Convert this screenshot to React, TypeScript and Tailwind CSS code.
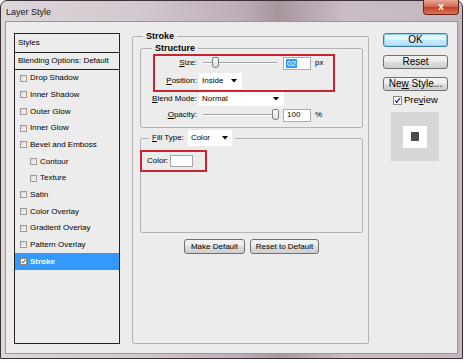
import React from 'react';

type Item = { label: string; indent?: boolean; checked?: boolean; selected?: boolean };

const items: Item[] = [
  { label: 'Drop Shadow' },
  { label: 'Inner Shadow' },
  { label: 'Outer Glow' },
  { label: 'Inner Glow' },
  { label: 'Bevel and Emboss' },
  { label: 'Contour', indent: true },
  { label: 'Texture', indent: true },
  { label: 'Satin' },
  { label: 'Color Overlay' },
  { label: 'Gradient Overlay' },
  { label: 'Pattern Overlay' },
  { label: 'Stroke', checked: true, selected: true },
];

function CheckMark() {
  return (
    <svg width="7" height="7" viewBox="0 0 7 7" className="block">
      <path d="M1 3.6 L2.8 5.4 L6 1.2" stroke="#1d3b8f" strokeWidth="1.4" fill="none" />
    </svg>
  );
}

function SmallCheck({ checked }: { checked?: boolean }) {
  return (
    <span
      className={
        checked
          ? 'w-[7px] h-[7px] shrink-0 border border-[#8c8c8c] bg-white flex items-center justify-center'
          : 'w-[7px] h-[7px] shrink-0 border border-[#9a9a9a] bg-[linear-gradient(135deg,#d8d8d8,#fbfbfb)]'
      }
    >
      {checked && <CheckMark />}
    </span>
  );
}

function Arrow() {
  return (
    <svg width="6" height="4" viewBox="0 0 6 4" className="block shrink-0">
      <path d="M0 0 H6 L3 3.5 Z" fill="#000" />
    </svg>
  );
}

function Slider({ thumb }: { thumb: 'left' | 'right' }) {
  return (
    <div className="ml-[6px] w-[74px] h-[14px] relative shrink-0">
      <div className="absolute left-0 right-0 top-[6px] h-[2px] border-t border-[#a3a3a3] border-b border-b-white" />
      <div
        className={
          thumb === 'left'
            ? 'absolute top-[1px] left-[9px] w-[7px] h-[11px] rounded-t-[2px] rounded-b-[3px] border border-[#7d7d7d] bg-[linear-gradient(#ffffff,#dcdcdc)]'
            : 'absolute top-[1px] left-[69px] w-[7px] h-[11px] rounded-t-[2px] rounded-b-[3px] border border-[#7d7d7d] bg-[linear-gradient(#ffffff,#dcdcdc)]'
        }
      />
    </div>
  );
}

export default function App() {
  return (
    <div className="w-[467px] h-[363px] bg-white overflow-hidden [font-family:'Liberation_Sans',Arial,sans-serif] text-black">
      <div className="w-[463px] h-[359px] border border-[#3b3036] rounded-t-[7px] flex flex-col bg-[linear-gradient(90deg,#ddd6db_0%,#d2c8cf_30%,#bcaeb8_52%,#a8969f_60%,#c9bdc6_75%,#c2b6bf_100%)]">
        {/* Title bar */}
        <div className="h-[20px] flex justify-between items-start shrink-0">
          <span className="pl-[5px] pt-[5px] text-[9px] leading-[12px] text-[#151515]">Layer Style</span>
          <div className="w-[36px] h-[15px] -mt-[1px] mr-[3px] rounded-b-[4px] border border-t-0 border-[#6b2318] bg-[linear-gradient(#eba696,#d5654d_50%,#c23c23_50%,#d9755d)] flex items-center justify-center text-white text-[10px] font-bold leading-none">
            x
          </div>
        </div>

        {/* Content */}
        <div className="mx-[4px] h-[333px] border border-[#9b949a] bg-[#ececec] flex items-start">
          {/* Styles list */}
          <div className="ml-[8px] mt-[11px] w-[106px] h-[311px] border border-[#222] flex flex-col text-[8px] shrink-0">
            <div className="h-[19px] flex items-center pl-[3px] border-b border-[#222]">Styles</div>
            <div className="h-[17px] flex items-center pl-[3px] border-b border-[#222]">Blending Options: Default</div>
            {items.map((it) => (
              <div
                key={it.label}
                className={
                  (it.selected ? 'bg-[#3399ff] text-white font-bold ' : '') +
                  (it.indent ? 'pl-[15px] ' : 'pl-[5px] ') +
                  'h-[16.67px] flex items-center gap-[3px]'
                }
              >
                <SmallCheck checked={it.checked} />
                <span>{it.label}</span>
              </div>
            ))}
          </div>

          {/* Stroke group */}
          <fieldset className="ml-[12px] mt-[9px] w-[237px] h-[313px] border border-[#b3b3b3] rounded-[2px] pl-[7px] pr-[5px] pt-[2px] shrink-0">
            <legend className="ml-[3px] px-[3px] text-[9px] font-bold leading-[10px]">Stroke</legend>

            {/* Structure */}
            <fieldset className="w-[223px] h-[85px] border border-[#b3b3b3] rounded-[2px] text-[8px]">
              <legend className="ml-[11px] px-[3px] text-[9px] font-bold leading-[10px]">Structure</legend>

              <div className="mt-[1px] ml-[12px] w-[182px] border-2 border-[#cc2231] pb-[1px]">
                <div className="h-[14px] flex items-center">
                  <span className="w-[42px] text-right shrink-0">
                    <u>S</u>ize:
                  </span>
                  <Slider thumb="left" />
                  <div className="ml-[6px] w-[28px] h-[13px] border border-[#a9abb2] bg-white flex items-center pl-[2px] shrink-0">
                    <span className="bg-[#3399ff] text-white px-[1px] leading-[9px]">02</span>
                  </div>
                  <span className="ml-[4px]">px</span>
                </div>
                <div className="mt-[3px] h-[16px] flex items-center">
                  <span className="w-[42px] text-right shrink-0">
                    <u>P</u>osition:
                  </span>
                  <div className="ml-[2px] w-[43px] h-[16px] bg-white flex items-center justify-between pl-[3px] pr-[5px] shrink-0">
                    <span>Inside</span>
                    <Arrow />
                  </div>
                </div>
              </div>

              <div className="h-[14px] flex items-center">
                <span className="w-[56px] text-right shrink-0">
                  <u>B</u>lend Mode:
                </span>
                <div className="ml-[2px] w-[85px] h-[14px] bg-white flex items-center justify-between pl-[3px] pr-[5px] shrink-0">
                  <span>Normal</span>
                  <Arrow />
                </div>
              </div>
              <div className="mt-[2px] h-[14px] flex items-center">
                <span className="w-[56px] text-right shrink-0">
                  <u>O</u>pacity:
                </span>
                <Slider thumb="right" />
                <div className="ml-[6px] w-[28px] h-[13px] border border-[#a9abb2] bg-white flex items-center pl-[3px] shrink-0">
                  100
                </div>
                <span className="ml-[4px]">%</span>
              </div>
            </fieldset>

            {/* Fill Type */}
            <fieldset className="mt-[2px] w-[223px] h-[103px] border border-[#b3b3b3] rounded-[2px] text-[8px]">
              <legend className="ml-[8px] px-[3px]">
                <span className="flex items-center h-[16px]">
                  <span>
                    <u>F</u>ill Type:
                  </span>
                  <span className="ml-[4px] w-[44px] h-[16px] bg-white flex items-center justify-between pl-[3px] pr-[4px]">
                    <span>Color</span>
                    <Arrow />
                  </span>
                </span>
              </legend>
              <div className="mt-[4px] -ml-[1px] w-[67px] h-[22px] border-2 border-[#cc2231] flex items-center pl-[5px]">
                <span>Color:</span>
                <span className="ml-[2px] w-[23px] h-[12px] border border-[#a5a5a5] bg-white" />
              </div>
            </fieldset>

            <div className="mt-[6px] flex justify-center gap-[5px] text-[8px]">
              <div className="w-[61px] h-[15px] rounded-[3px] border border-[#707070] bg-[linear-gradient(#f4f4f4,#ebebeb_50%,#dddddd_50%,#cfcfcf)] flex items-center justify-center">
                Make Default
              </div>
              <div className="w-[69px] h-[15px] rounded-[3px] border border-[#707070] bg-[linear-gradient(#f4f4f4,#ebebeb_50%,#dddddd_50%,#cfcfcf)] flex items-center justify-center">
                Reset to Default
              </div>
            </div>
          </fieldset>

          {/* Right column */}
          <div className="ml-[14px] mt-[11px] w-[65px] flex flex-col shrink-0">
            <div className="h-[14px] rounded-[3px] border border-[#3c7fb1] bg-[linear-gradient(#eef8fd,#dff2fc_50%,#c8e9fb_50%,#b6e0f7)] shadow-[inset_0_0_0_1px_#8fd0f2] flex items-center justify-center text-[10px] leading-none">
              OK
            </div>
            <div className="mt-[8px] h-[14px] rounded-[3px] border border-[#707070] bg-[linear-gradient(#f4f4f4,#ebebeb_50%,#dddddd_50%,#cfcfcf)] flex items-center justify-center text-[10px] leading-none">
              Reset
            </div>
            <div className="mt-[8px] h-[14px] rounded-[3px] border border-[#707070] bg-[linear-gradient(#f4f4f4,#ebebeb_50%,#dddddd_50%,#cfcfcf)] flex items-center justify-center text-[10px] leading-none">
              <span>
                Ne<u>w</u> Style...
              </span>
            </div>
            <div className="mt-[4px] h-[10px] flex items-center pl-[10px] text-[9.5px]">
              <span className="w-[9px] h-[9px] border border-[#8c8c8c] bg-white flex items-center justify-center shrink-0">
                <CheckMark />
              </span>
              <span className="ml-[2px]">
                Pre<u>v</u>iew
              </span>
            </div>
            <div className="mt-[7px] ml-[8px] w-[48px] h-[49px] bg-[#d6d6d6] flex items-center justify-center">
              <div className="w-[24px] h-[22px] bg-white flex items-center justify-center">
                <div className="w-[8px] h-[9px] bg-[#4b4b4b]" />
              </div>
            </div>
          </div>
        </div>
      </div>
    </div>
  );
}
